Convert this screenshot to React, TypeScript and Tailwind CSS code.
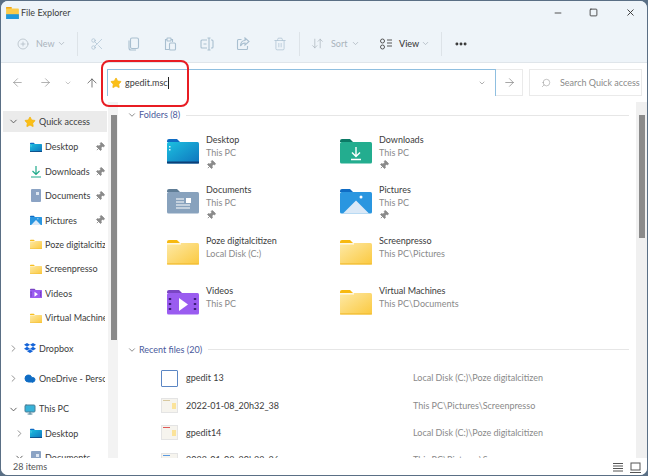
import type { ReactNode } from "react";
import { ChevronDown, ChevronRight, ArrowLeft, ArrowRight, ArrowUp, Search, Scissors, Trash2, CirclePlus, ArrowDownUp, Minus, Square, X, Pin, Star, Cloud, Monitor, MoreHorizontal } from "lucide-react";
import { SiDropbox } from "react-icons/si";

function YellowFolder({ w = 32 }: { w?: number }) {
  return (
    <svg width={w} height={w * 0.8125} viewBox="0 0 32 26">
      <defs>
        <linearGradient id="yf" x1="0" y1="0" x2="1" y2="1">
          <stop offset="0" stopColor="#fde9a6" />
          <stop offset="1" stopColor="#fbc93f" />
        </linearGradient>
      </defs>
      <path d="M0 3a2 2 0 0 1 2-2h8l3 3H0z" fill="#f7b90f" />
      <rect x="0" y="4" width="32" height="21.5" rx="1.5" fill="url(#yf)" />
      <rect x="0" y="4" width="14" height="1.6" fill="#fff6dc" />
      <rect x="0" y="24.3" width="32" height="1.2" fill="#f2bd34" />
    </svg>
  );
}

function BlueDesktop({ w = 32 }: { w?: number }) {
  return (
    <svg width={w} height={w * 0.8125} viewBox="0 0 32 26">
      <defs>
        <linearGradient id="bd" x1="0" y1="0" x2="1" y2="1">
          <stop offset="0" stopColor="#1cc0e0" />
          <stop offset="1" stopColor="#0f74bd" />
        </linearGradient>
      </defs>
      <path d="M0 3a2 2 0 0 1 2-2h8l3 3H0z" fill="#0f6cc4" />
      <rect x="0" y="4" width="32" height="21.5" rx="1.5" fill="url(#bd)" />
      <rect x="0" y="23.5" width="32" height="2" fill="#0c3f78" />
      <rect x="2" y="8" width="1.5" height="1.5" fill="#d9f4fb" />
      <rect x="2" y="11" width="1.5" height="1.5" fill="#d9f4fb" />
    </svg>
  );
}

function GreenDownloads() {
  return (
    <svg width="32" height="26" viewBox="0 0 32 26">
      <path d="M0 3a2 2 0 0 1 2-2h8l3 3H0z" fill="#0c7a66" />
      <rect x="0" y="4" width="32" height="21.5" rx="1.5" fill="#23ad8f" />
      <path d="M16 9v9M12 14.5l4 4 4-4M11 21.5h10" stroke="#fff" strokeWidth="1.4" fill="none" />
    </svg>
  );
}

function GrayDocuments() {
  return (
    <svg width="32" height="26" viewBox="0 0 32 26">
      <path d="M0 3a2 2 0 0 1 2-2h8l3 3H0z" fill="#5f7d96" />
      <rect x="0" y="4" width="32" height="21.5" rx="1.5" fill="#88a2bd" />
      <path d="M9 11h8M9 14h8M9 17h14M9 20h14" stroke="#fff" strokeWidth="1.2" />
      <rect x="19" y="10" width="5" height="5" fill="#fff" />
    </svg>
  );
}

function BluePictures({ w = 32 }: { w?: number }) {
  return (
    <svg width={w} height={w * 0.8125} viewBox="0 0 32 26">
      <path d="M0 3a2 2 0 0 1 2-2h8l3 3H0z" fill="#0f6cc4" />
      <rect x="0" y="4" width="32" height="21.5" rx="1.5" fill="#2a96e0" />
      <path d="M3 25.5l13-13 13 13z" fill="#dbe9f7" />
      <circle cx="21" cy="9" r="1.5" fill="#fff" />
    </svg>
  );
}

function PurpleVideos({ w = 32 }: { w?: number }) {
  return (
    <svg width={w} height={w * 0.8125} viewBox="0 0 32 26">
      <path d="M0 3a2 2 0 0 1 2-2h10l3 3H0z" fill="#7a45c4" />
      <rect x="0" y="4" width="32" height="21.5" rx="1.5" fill="#9a5cf0" />
      <path d="M12 9l9 6.5-9 6.5z" fill="#fff" />
      <path d="M3 9v2M3 14v2M3 19v2M28 9v2M28 14v2M28 19v2" stroke="#3d1f7a" strokeWidth="2.4" />
    </svg>
  );
}

function NavDocs() {
  return (
    <svg width="10" height="13" viewBox="0 0 10 13">
      <rect width="10" height="13" rx="1" fill="#8ba3c4" />
      <rect x="5" y="3" width="3" height="3" fill="#dde6f1" />
    </svg>
  );
}

function GoldStar({ size }: { size: number }) {
  return <Star size={size} fill="#fbbf17" stroke="#f3b40e" strokeWidth={1.5} />;
}

function PinMark() {
  return <Pin size={10} className="text-[#8b8b8b] shrink-0 rotate-45" fill="#8b8b8b" />;
}

function NavRow({ icon, label, pinned, child, arrow, className = "h-[24.4px]" }: { icon: ReactNode; label: string; pinned?: boolean; child?: boolean; arrow?: "down" | "right"; className?: string }) {
  return (
    <div className={`flex items-center shrink-0 overflow-hidden whitespace-nowrap ml-[2px] w-[104px] pr-[2px] ${child ? "pl-[10px]" : "pl-[4px]"} ${className}`}>
      <span className="w-[12px] mr-[5px] flex justify-center shrink-0">
        {arrow === "down" && <ChevronDown size={11} className="text-[#555]" />}
        {arrow === "right" && <ChevronRight size={11} className="text-[#888]" />}
      </span>
      <span className="w-[12px] mr-[3px] flex justify-center shrink-0">{icon}</span>
      <span className="flex-1 min-w-0 overflow-hidden text-[#3c3c3c]">{label}</span>
      {pinned && <PinMark />}
    </div>
  );
}

function Tile({ icon, name, sub, pinned }: { icon: ReactNode; name: string; sub: string; pinned?: boolean }) {
  return (
    <div className="flex h-[50.4px] w-[173px] pt-[2px]">
      <div className="w-[39px] pt-[5px] shrink-0">{icon}</div>
      <div className="flex flex-col leading-[13px] whitespace-nowrap">
        <span className="text-[#3c3c3c]">{name}</span>
        <span className="text-[#8a8a8a]">{sub}</span>
        {pinned && <span className="mt-[1px]"><PinMark /></span>}
      </div>
    </div>
  );
}

function FileThumb({ accent }: { accent: string }) {
  return (
    <div className="w-[17px] h-[15px] bg-[#f6f4ee] border border-[#e4e4e4] relative">
      <div className={`absolute top-[1px] left-[1px] w-[7px] h-[1px] ${accent}`} />
      <div className="absolute right-[1px] top-[4px] w-[4px] h-[6px] bg-[#fbe39a]" />
    </div>
  );
}

function RecentRow({ icon, name, path }: { icon: ReactNode; name: string; path: string }) {
  return (
    <div className="flex items-center h-[27.3px] shrink-0 whitespace-nowrap">
      <span className="w-[25px] shrink-0">{icon}</span>
      <span className="w-[227px] text-[#3c3c3c] shrink-0">{name}</span>
      <span className="text-[#8a8a8a]">{path}</span>
    </div>
  );
}

function SectionHead({ label }: { label: string }) {
  return (
    <div className="flex items-center h-[16px] text-[#4a5a9c]">
      <ChevronDown size={10} className="text-[#777] mr-[2px]" />
      <span>{label}</span>
      <div className="flex-1 h-[1px] bg-[#e6e6e6] ml-[6px]" />
    </div>
  );
}

export default function App() {
  return (
    <div className="w-[648px] h-[476px] bg-[#5a6f85] overflow-hidden relative font-['Lato',sans-serif] text-[9px]">
      <div className="absolute inset-[1px] rounded-[7px] bg-white overflow-hidden flex flex-col">
        {/* title + command bar */}
        <div className="bg-[#eef4f9] h-[62px] border-b border-[#dfe5ea] shrink-0">
          <div className="h-[23px] flex items-center pl-[5px]">
            <svg width="13" height="12" viewBox="0 0 16 15"><rect y="0" width="7" height="3" fill="#f3a712" /><rect y="2" width="16" height="13" rx="1" fill="#fbcb4a" /><rect y="9" width="16" height="6" fill="#2098dc" /></svg>
            <span className="ml-[2px] text-[#3c3c3c]">File Explorer</span>
            <div className="ml-auto flex items-center text-[#333]">
              <Minus size={10} className="mr-[26px]" />
              <Square size={9} strokeWidth={2.2} className="mr-[27px]" />
              <X size={11} className="mr-[11px]" />
            </div>
          </div>
          <div className="h-[38px] flex items-center text-[#a9b3bc] pl-[16px] pt-[1px]">
            <CirclePlus size={12} strokeWidth={1.3} />
            <span className="ml-[7px] w-[18px]">New</span>
            <ChevronDown size={9} className="ml-[3px]" />
            <div className="w-[1px] h-[24px] bg-[#dde3e8] ml-[11px]" />
            <div className="w-[197px] ml-[12px] flex justify-between text-[#a9bfd0]">
              <Scissors size={14} strokeWidth={1.2} />
              <svg width="14" height="14" viewBox="0 0 14 14" fill="none" stroke="currentColor" strokeWidth="1.1"><rect x="3.5" y="1" width="8" height="10.5" rx="1.5" /><path d="M2 3.5v7.5a2 2 0 0 0 2 2h5" /></svg>
              <svg width="14" height="14" viewBox="0 0 14 14" fill="none" stroke="currentColor" strokeWidth="1.1"><path d="M4 2.5H2.5v10H6" /><path d="M8 2.5h1.5V5" /><rect x="4" y="1" width="4" height="3" rx="0.5" /><rect x="6.5" y="6" width="6" height="7" rx="1" /></svg>
              <svg width="14" height="14" viewBox="0 0 14 14" fill="none" stroke="currentColor" strokeWidth="1.1"><path d="M7 3H2a1 1 0 0 0-1 1v6a1 1 0 0 0 1 1h5" /><path d="M11 3h1a1 1 0 0 1 1 1v6a1 1 0 0 1-1 1h-1" /><path d="M9 1v12M7.5 1h3M7.5 13h3M3.5 7h3" /></svg>
              <svg width="14" height="14" viewBox="0 0 14 14" fill="none" stroke="currentColor" strokeWidth="1.1"><path d="M5.5 2.5H2.5a1 1 0 0 0-1 1v8a1 1 0 0 0 1 1h8a1 1 0 0 0 1-1V9" /><path d="M9 1l4 3.5L9 8V6C7 6 5.500 7 4.500 9c0-3 1.500-5.500 4.500-5.500z" /></svg>
              <Trash2 size={14} strokeWidth={1.2} />
            </div>
            <div className="w-[1px] h-[24px] bg-[#dde3e8] ml-[12px]" />
            <ArrowDownUp size={13} strokeWidth={1.3} className="ml-[11px]" />
            <span className="ml-[7px] w-[17px]">Sort</span>
            <ChevronDown size={9} className="ml-[3px]" />
            <svg width="12" height="12" viewBox="0 0 12 12" fill="none" stroke="#555" strokeWidth="1" className="ml-[20px]"><circle cx="2.500" cy="3" r="2" /><circle cx="2.500" cy="9" r="2" /><path d="M7 2h5M7 5h5M7 8h5" /></svg>
            <span className="ml-[7px] w-[20px] text-[#3c3c3c] font-medium">View</span>
            <ChevronDown size={9} className="ml-[2px]" />
            <div className="w-[1px] h-[24px] bg-[#dde3e8] ml-[11px]" />
            <MoreHorizontal size={14} strokeWidth={3} className="text-[#333] ml-[12px]" />
          </div>
        </div>
        {/* address row */}
        <div className="h-[39px] flex items-start shrink-0 pt-[6px]">
          <div className="h-[27px] flex items-center shrink-0">
            <ArrowLeft size={13} strokeWidth={1.2} className="ml-[10px] text-[#8a8a8a]" />
            <ArrowRight size={13} strokeWidth={1.2} className="ml-[15px] text-[#8a8a8a]" />
            <ChevronDown size={8} className="ml-[12px] text-[#aaa]" />
            <ArrowUp size={14} strokeWidth={1.2} className="ml-[13px] text-[#444]" />
          </div>
          <div className="w-[389px] h-[27px] ml-[8px] border-t border-l border-r border-[#8fbfe0] flex items-center pl-[2px]">
            <GoldStar size={12} />
            <span className="ml-[3px] text-[#3c3c3c] border-r border-[#222] leading-[12px]">gpedit.msc</span>
            <ChevronDown size={8} className="ml-auto mr-[9px] text-[#888]" />
          </div>
          <div className="w-[27px] h-[27px] border-t border-r border-b border-[#eaeaea] flex items-center justify-center">
            <ArrowRight size={13} strokeWidth={1.2} className="text-[#777]" />
          </div>
          <div className="w-[113px] h-[27px] ml-[6px] border border-[#eaeaea] flex items-center pl-[11px] text-[#8a8a8a] whitespace-nowrap overflow-hidden">
            <Search size={10} strokeWidth={1.2} className="shrink-0 -scale-x-100" />
            <span className="ml-[9px]">Search Quick access</span>
          </div>
        </div>
        {/* body */}
        <div className="flex-1 flex min-h-0">
          <div className="w-[107px] shrink-0 overflow-hidden flex flex-col pt-[9px]">
            <NavRow arrow="down" className="h-[21px] mb-[3px] bg-[#ebebeb]" label="Quick access" icon={<GoldStar size={12} />} />
            <NavRow child label="Desktop" pinned icon={<BlueDesktop w={13} />} />
            <NavRow child label="Downloads" pinned icon={<svg width="12" height="13" viewBox="0 0 12 13"><path d="M6 1v8M2.500 6L6 9.500 9.500 6M1 12h10" stroke="#1faa8a" strokeWidth="1.2" fill="none" /></svg>} />
            <NavRow child label="Documents" pinned icon={<NavDocs />} />
            <NavRow child label="Pictures" pinned icon={<BluePictures w={13} />} />
            <NavRow child label="Poze digitalcitizen" icon={<YellowFolder w={13} />} />
            <NavRow child label="Screenpresso" icon={<YellowFolder w={13} />} />
            <NavRow child label="Videos" icon={<PurpleVideos w={13} />} />
            <NavRow child label="Virtual Machines" icon={<YellowFolder w={13} />} />
            <NavRow arrow="right" className="h-[30.5px] mt-[3px]" label="Dropbox" icon={<SiDropbox size={12} color="#1464d8" />} />
            <NavRow arrow="right" className="h-[30.5px]" label="OneDrive - Personal" icon={<Cloud size={13} fill="#0f6cc4" stroke="#0f6cc4" />} />
            <NavRow arrow="down" className="h-[24px] mt-[3px]" label="This PC" icon={<Monitor size={13} fill="#38b2d8" stroke="#4a7f96" />} />
            <NavRow child arrow="right" label="Desktop" icon={<BlueDesktop w={13} />} />
            <NavRow child arrow="down" label="Documents" icon={<NavDocs />} />
          </div>
          <div className="w-[10px] shrink-0 bg-[#f3f3f3] pl-[3px] pt-[13px]">
            <div className="w-[6px] h-[225px] bg-[#8a8a8a]" />
          </div>
          <div className="flex-1 min-w-0 overflow-hidden pl-[9px] pt-[5px] pr-[7px]">
            <SectionHead label="Folders (8)" />
            <div className="grid grid-cols-2 w-[346px] ml-[40px] mt-[8px]">
              <Tile icon={<BlueDesktop />} name="Desktop" sub="This PC" pinned />
              <Tile icon={<GreenDownloads />} name="Downloads" sub="This PC" pinned />
              <Tile icon={<GrayDocuments />} name="Documents" sub="This PC" pinned />
              <Tile icon={<BluePictures />} name="Pictures" sub="This PC" pinned />
              <Tile icon={<YellowFolder />} name="Poze digitalcitizen" sub="Local Disk (C:)" />
              <Tile icon={<YellowFolder />} name="Screenpresso" sub="This PC\Pictures" />
              <Tile icon={<PurpleVideos />} name="Videos" sub="This PC" />
              <Tile icon={<YellowFolder />} name="Virtual Machines" sub="This PC\Documents" />
            </div>
            <div className="mt-[9px]"><SectionHead label="Recent files (20)" /></div>
            <div className="ml-[34px] mt-[7px] flex flex-col">
              <RecentRow icon={<div className="w-[17px] h-[17px] bg-white border border-[#5b86c4] rounded-[1px]" />} name="gpedit 13" path="Local Disk (C:)\Poze digitalcitizen" />
              <RecentRow icon={<FileThumb accent="bg-[#d8c9a0]" />} name="2022-01-08_20h32_38" path="This PC\Pictures\Screenpresso" />
              <RecentRow icon={<FileThumb accent="bg-[#e05a5a]" />} name="gpedit14" path="Local Disk (C:)\Poze digitalcitizen" />
              <RecentRow icon={<FileThumb accent="bg-[#5a9ae0]" />} name="2022-01-08_20h32_36" path="This PC\Pictures\Screenpresso" />
            </div>
          </div>
          <div className="w-[11px] shrink-0 bg-[#f0f0f0] pl-[3px] pt-[13px]">
            <div className="w-[6px] h-[123px] bg-[#8a8a8a]" />
          </div>
        </div>
        {/* status bar */}
        <div className="h-[17px] shrink-0 bg-white flex items-center pl-[12px] pt-[1px] text-[#555]">
          <span>28 items</span>
          <svg width="10" height="10" viewBox="0 0 10 10" stroke="#555" strokeWidth="1" className="ml-auto mr-[7px]"><path d="M0 1.500h10M0 4h10M0 6.500h10M0 9h10" /></svg>
          <svg width="11" height="11" viewBox="0 0 11 11" fill="none" stroke="#555" strokeWidth="1" className="mr-[6px]"><rect x="1" y="1" width="9" height="7" /><path d="M0 10.500h11" /></svg>
        </div>
      </div>
      {/* red highlight around the address bar */}
      <div className="absolute left-[101px] top-[60px] w-[88px] h-[47px] border-2 border-[#e81c23] rounded-[8px]" />
    </div>
  );
}
